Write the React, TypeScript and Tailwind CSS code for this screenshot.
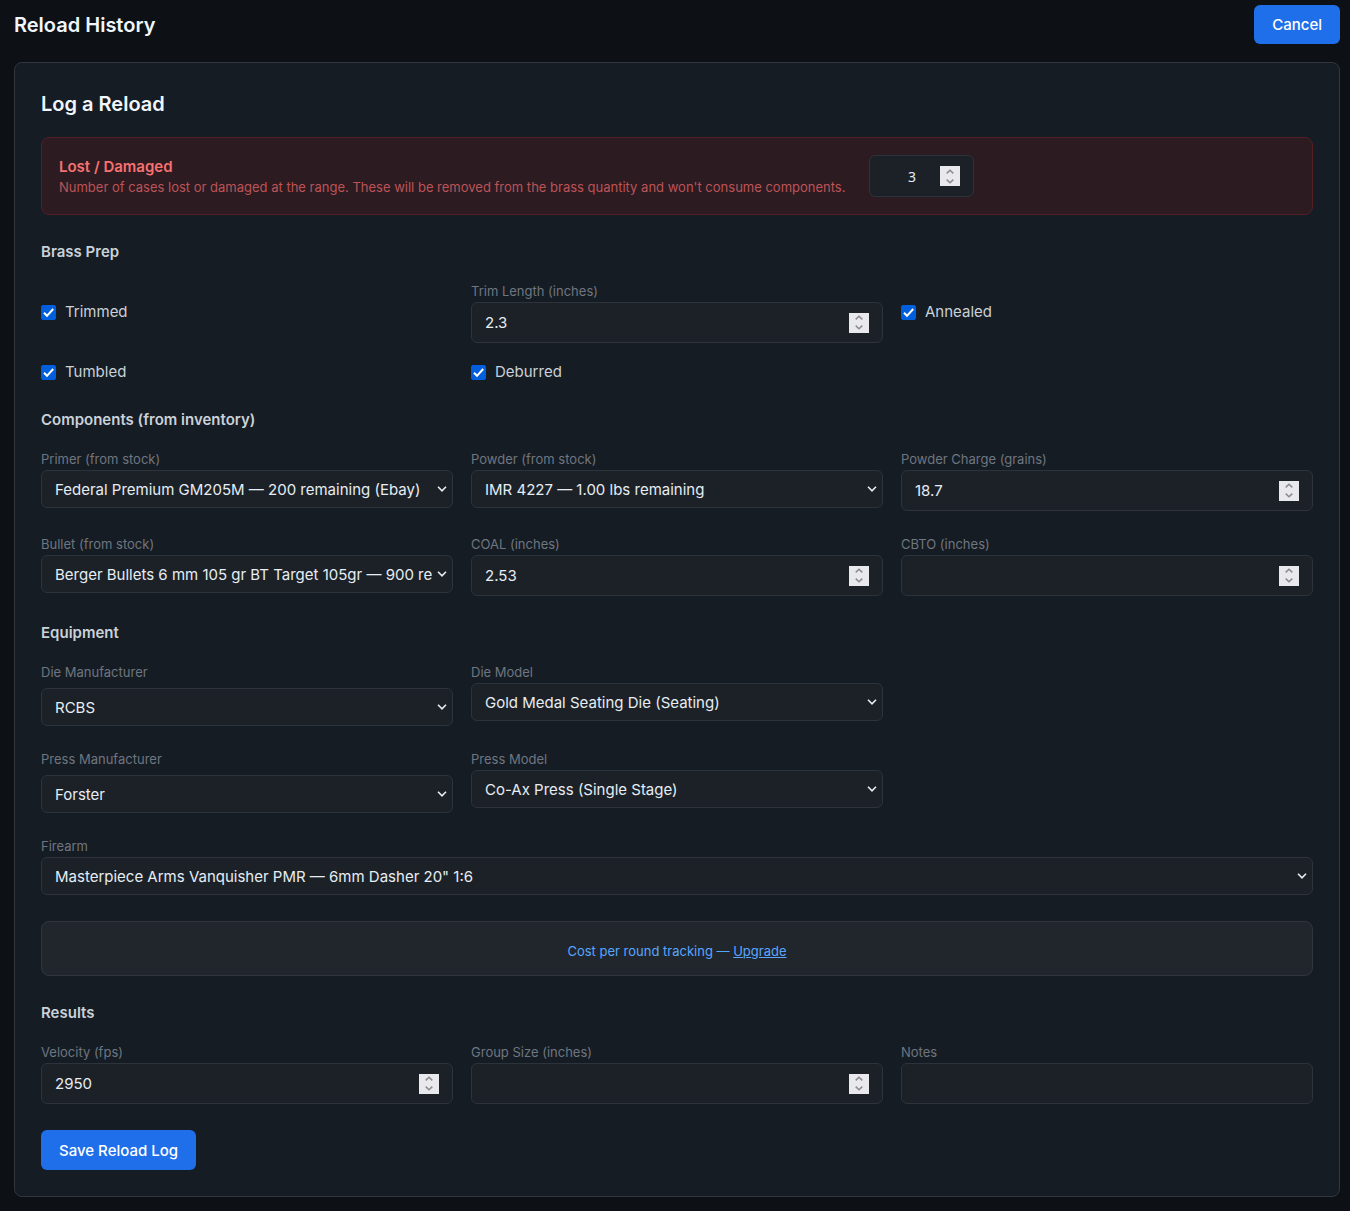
import { ReactNode, useState } from "react";

type FieldProps = {
  id: string;
  label: string;
};

type NumberFieldProps = FieldProps & {
  initial?: string;
  step?: number;
};

type SelectFieldProps = FieldProps & {
  options: string[];
  spaced?: boolean;
};

const labelClass = "block pb-px text-[13px] leading-5 text-[#6e7681]";

const Chevron = () => (
  <svg
    viewBox="0 0 10 6"
    className="pointer-events-none absolute right-[6px] top-1/2 h-[6px] w-[10px] -translate-y-1/2"
    fill="none"
    stroke="#e6edf3"
    strokeWidth="1.6"
    aria-hidden="true"
  >
    <path d="M1 0.8 L5 4.8 L9 0.8" />
  </svg>
);

const NumberInput = ({
  id,
  initial = "",
  step = 1,
  className = "h-[41px] text-[15px]",
  inputClassName = "pt-[2px]",
}: {
  id: string;
  initial?: string;
  step?: number;
  className?: string;
  inputClassName?: string;
}) => {
  const [value, setValue] = useState(initial);

  const stepBy = (amount: number) => {
    setValue(String(Number((Number(value) + amount).toFixed(3))));
  };

  return (
    <div
      className={`flex items-center rounded-md border border-[#2d333b] bg-[#1c2128] px-[13px] text-[#e6edf3] ${className}`}
    >
      <input
        id={id}
        type="number"
        value={value}
        step="any"
        onChange={(event) => setValue(event.target.value)}
        className={`w-full min-w-0 flex-1 appearance-none bg-transparent outline-none [appearance:textfield] [&::-webkit-inner-spin-button]:appearance-none ${inputClassName}`}
      />
      <div className="flex h-5 w-5 flex-none flex-col bg-[#e8e8ed]">
        <button
          type="button"
          aria-label="Increase"
          onClick={() => stepBy(step)}
          className="flex flex-1 items-center justify-center"
        >
          <svg viewBox="0 0 8 5" className="h-[5px] w-2" fill="none" stroke="#8b8b90" strokeWidth="1.5">
            <path d="M0.7 4.4 L4 1.2 L7.3 4.4" />
          </svg>
        </button>
        <button
          type="button"
          aria-label="Decrease"
          onClick={() => stepBy(-step)}
          className="flex flex-1 items-center justify-center"
        >
          <svg viewBox="0 0 8 5" className="h-[5px] w-2" fill="none" stroke="#8b8b90" strokeWidth="1.5">
            <path d="M0.7 0.6 L4 3.8 L7.3 0.6" />
          </svg>
        </button>
      </div>
    </div>
  );
};

const NumberField = ({ id, label, initial, step }: NumberFieldProps) => (
  <div>
    <label htmlFor={id} className={labelClass}>
      {label}
    </label>
    <NumberInput id={id} initial={initial} step={step} />
  </div>
);

const SelectField = ({ id, label, options, spaced }: SelectFieldProps) => (
  <div>
    <label htmlFor={id} className={labelClass}>
      {label}
    </label>
    <div className={`relative ${spaced ? "mt-[5px]" : ""}`}>
      <select
        id={id}
        className="block h-[38px] w-full appearance-none rounded-md border border-[#2d333b] bg-[#1c2128] pt-[2px] pl-[13px] pr-5 text-[15px] text-[#e6edf3] outline-none"
      >
        {options.map((option) => (
          <option key={option}>{option}</option>
        ))}
      </select>
      <Chevron />
    </div>
  </div>
);

const CheckField = ({ id, label }: FieldProps) => {
  const [checked, setChecked] = useState(true);

  return (
    <label
      htmlFor={id}
      className="flex h-[22px] items-center gap-[9px] text-[15px] text-[#c9d1d9]"
    >
      <span className="relative h-[15px] w-[15px] flex-none">
        <input
          id={id}
          type="checkbox"
          checked={checked}
          onChange={(event) => setChecked(event.target.checked)}
          className="block h-[15px] w-[15px] appearance-none rounded-[2px] border border-[#767676] bg-white checked:border-[#005fdd] checked:bg-[#005fdd]"
        />
        {checked && (
          <svg
            viewBox="0 0 15 15"
            className="pointer-events-none absolute inset-0"
            fill="none"
            stroke="#fff"
            strokeWidth="2"
          >
            <path d="M3 7.8 L6 10.8 L12.2 4" />
          </svg>
        )}
      </span>
      {label}
    </label>
  );
};

const Section = ({ title, children }: { title: string; children: ReactNode }) => (
  <section className="mt-[26px]">
    <h3 className="mb-[18px] text-[15px] leading-[22px] font-semibold text-[#c9d1d9]">
      {title}
    </h3>
    {children}
  </section>
);

const App = () => {
  return (
    <div className="min-h-screen bg-[#0d1116] pt-[5px] pr-[10px] pb-[14px] pl-[14px] font-['Inter',sans-serif]">
      <header className="mb-[18px] flex items-center justify-between">
        <h1 className="text-[20px] leading-[30px] font-semibold text-[#f0f6fc]">
          Reload History
        </h1>
        <button
          type="button"
          className="h-[39px] rounded-md bg-[#1f6feb] px-[18px] pt-[2px] text-[15px] font-medium text-white"
        >
          Cancel
        </button>
      </header>

      <form
        onSubmit={(event) => event.preventDefault()}
        className="rounded-lg border border-[#30363d] bg-[#161c23] p-[26px]"
      >
        <h2 className="mb-[18px] text-[20px] leading-[30px] font-semibold text-[#f0f6fc]">
          Log a Reload
        </h2>

        <div className="flex items-center gap-6 rounded-lg border border-[#541f24] bg-[#2c1c21] p-[17px]">
          <label htmlFor="lost">
            <span className="block text-[15px] leading-[22px] font-semibold text-[#f87171]">
              Lost / Damaged
            </span>
            <span className="block text-[13px] leading-[18px] text-[#bd5358]">
              Number of cases lost or damaged at the range. These will be removed
              from the brass quantity and won't consume components.
            </span>
          </label>
          <NumberInput
            id="lost"
            initial="3"
            className="h-[42px] w-[105px] flex-none text-[14px]"
            inputClassName="text-center font-['Noto_Sans',sans-serif]"
          />
        </div>

        <Section title="Brass Prep">
          <div className="grid grid-cols-3 items-center gap-[18px]">
            <CheckField id="trimmed" label="Trimmed" />
            <NumberField id="trim-length" label="Trim Length (inches)" initial="2.3" step={0.001} />
            <CheckField id="annealed" label="Annealed" />
            <CheckField id="tumbled" label="Tumbled" />
            <CheckField id="deburred" label="Deburred" />
          </div>
        </Section>

        <Section title="Components (from inventory)">
          <div className="grid grid-cols-3 items-start gap-x-[18px] gap-y-[23px]">
            <SelectField
              id="primer"
              label="Primer (from stock)"
              options={["Federal Premium GM205M — 200 remaining (Ebay)"]}
            />
            <SelectField
              id="powder"
              label="Powder (from stock)"
              options={["IMR 4227 — 1.00 lbs remaining"]}
            />
            <NumberField id="charge" label="Powder Charge (grains)" initial="18.7" step={0.1} />
            <SelectField
              id="bullet"
              label="Bullet (from stock)"
              options={["Berger Bullets 6 mm 105 gr BT Target 105gr — 900 remaining"]}
            />
            <NumberField id="coal" label="COAL (inches)" initial="2.53" step={0.001} />
            <NumberField id="cbto" label="CBTO (inches)" step={0.001} />
          </div>
        </Section>

        <Section title="Equipment">
          <div className="grid grid-cols-3 items-start gap-x-[18px] gap-y-[23px]">
            <SelectField id="die-maker" label="Die Manufacturer" options={["RCBS"]} spaced />
            <SelectField
              id="die-model"
              label="Die Model"
              options={["Gold Medal Seating Die (Seating)"]}
            />
            <div className="col-start-1">
              <SelectField
                id="press-maker"
                label="Press Manufacturer"
                options={["Forster"]}
                spaced
              />
            </div>
            <SelectField
              id="press-model"
              label="Press Model"
              options={["Co-Ax Press (Single Stage)"]}
            />
            <div className="col-span-3">
              <SelectField
                id="firearm"
                label="Firearm"
                options={['Masterpiece Arms Vanquisher PMR — 6mm Dasher 20" 1:6']}
              />
            </div>
          </div>
        </Section>

        <div className="mt-[26px] rounded-lg border border-[#30363d] bg-[#21262d] pt-[19px] pb-[14px] text-center text-[13px] leading-5 text-[#58a6ff]">
          Cost per round tracking —{" "}
          <a href="#upgrade" className="underline">
            Upgrade
          </a>
        </div>

        <Section title="Results">
          <div className="grid grid-cols-3 items-start gap-x-[18px]">
            <NumberField id="velocity" label="Velocity (fps)" initial="2950" />
            <NumberField id="group-size" label="Group Size (inches)" step={0.001} />
            <div>
              <label htmlFor="notes" className={labelClass}>
                Notes
              </label>
              <input
                id="notes"
                type="text"
                className="block h-[41px] w-full rounded-md border border-[#2d333b] bg-[#1c2128] px-[13px] text-[15px] text-[#e6edf3] outline-none"
              />
            </div>
          </div>
        </Section>

        <button
          type="submit"
          className="mt-[26px] block h-10 rounded-md bg-[#1f6feb] px-[18px] pt-[2px] text-[15px] font-medium text-white"
        >
          Save Reload Log
        </button>
      </form>
    </div>
  );
};

export default App;
